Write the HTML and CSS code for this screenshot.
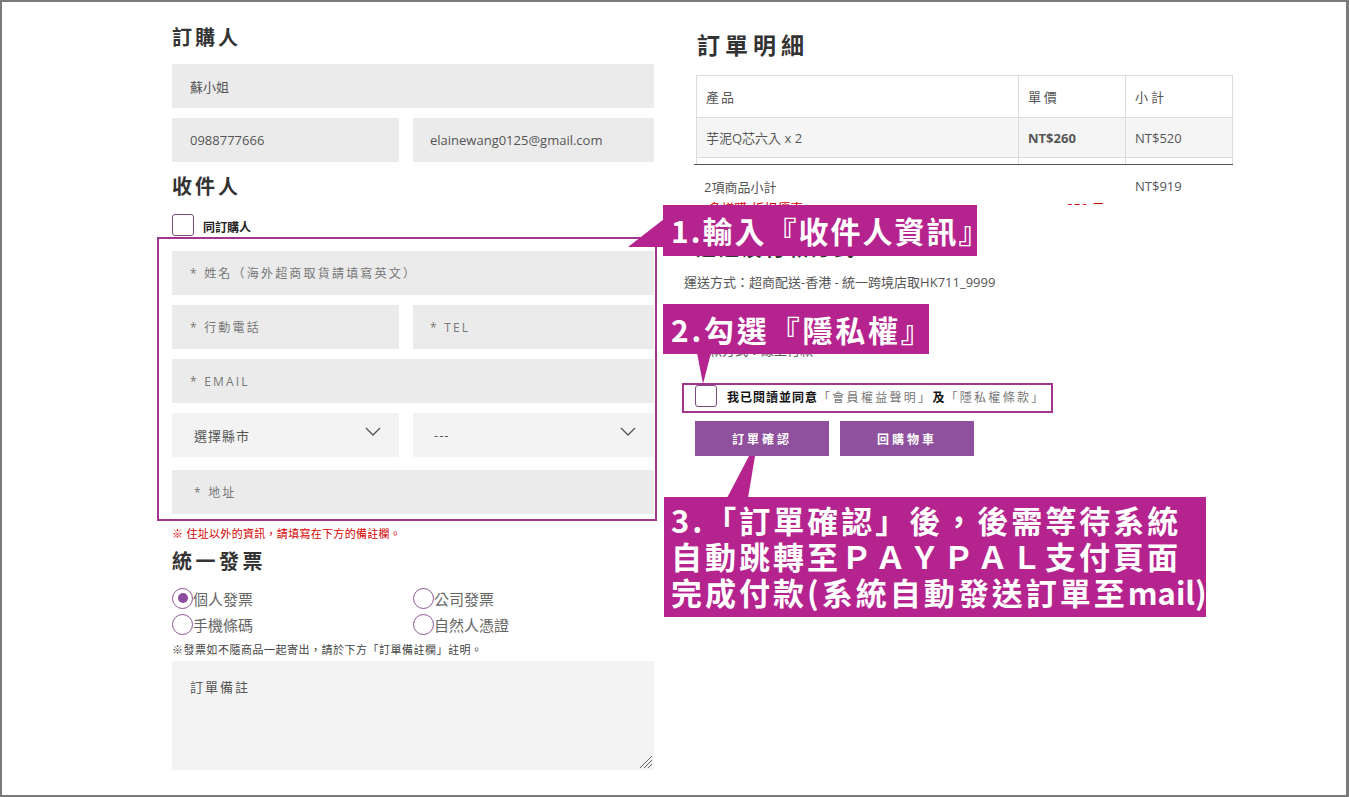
FILE: index.html
```html
<!DOCTYPE html>
<html lang="zh-Hant">
<head>
<meta charset="utf-8">
<title>結帳</title>
<link rel="stylesheet" href="styles.css">
</head>
<body>
<div class="frame">
  <div class="page">
    <section class="col-left">
      <h2 class="sec-title">訂購人</h2>
      <div class="field">蘇小姐</div>
      <div class="row2 mt10">
        <div class="field">0988777666</div>
        <div class="field val-right">elainewang0125@gmail.com</div>
      </div>
      <h2 class="sec-title t-recv">收件人</h2>
      <label class="chk-row"><span class="chk"></span><span class="chk-label">同訂購人</span></label>
      <div class="recv-fields">
        <div class="field ph">* 姓名（海外超商取貨請填寫英文）</div>
        <div class="row2">
          <div class="field ph">* 行動電話</div>
          <div class="field ph val-right">* TEL</div>
        </div>
        <div class="field ph">* EMAIL</div>
        <div class="row2">
          <div class="select"><span>選擇縣市</span><svg width="16" height="9" viewBox="0 0 16 9"><path d="M1 1 L8 8 L15 1" fill="none" stroke="#555" stroke-width="1.3"/></svg></div>
          <div class="select sel-right"><span>---</span><svg width="16" height="9" viewBox="0 0 16 9"><path d="M1 1 L8 8 L15 1" fill="none" stroke="#555" stroke-width="1.3"/></svg></div>
        </div>
        <div class="field ph addr">* 地址</div>
      </div>
      <p class="warn">※ 住址以外的資訊，請填寫在下方的備註欄。</p>
      <h2 class="sec-title t-inv">統一發票</h2>
      <div class="radios">
        <label class="radio"><span class="circle on"></span>個人發票</label>
        <label class="radio"><span class="circle"></span>公司發票</label>
        <label class="radio"><span class="circle"></span>手機條碼</label>
        <label class="radio"><span class="circle"></span>自然人憑證</label>
      </div>
      <p class="note">※發票如不隨商品一起寄出，請於下方「訂單備註欄」註明。</p>
      <div class="textarea">
        <span>訂單備註</span>
        <svg class="grip" width="14" height="14" viewBox="0 0 14 14"><path d="M14 2 L2 14 M14 6 L6 14 M14 10 L10 14" stroke="#666" stroke-width="1"/></svg>
      </div>
    </section>

    <section class="col-right">
      <h2 class="detail-title">訂單明細</h2>
      <div class="tbl-wrap">
        <table class="tbl">
          <thead>
            <tr><th class="c1">產品</th><th class="c2">單價</th><th class="c3">小計</th></tr>
          </thead>
          <tbody>
            <tr class="alt"><td>芋泥Q芯六入 x 2</td><td class="b">NT$260</td><td>NT$520</td></tr>
            <tr><td>芋泥鬆餅禮盒 x 1</td><td class="b">NT$399</td><td>NT$399</td></tr>
          </tbody>
        </table>
      </div>
      <div class="sum">
        <div class="sum-row"><span>2項商品小計</span><span></span><span>NT$919</span></div>
        <div class="sum-row red"><span>-多樣購-折扣優惠</span><span class="disc">-250 元</span><span></span></div>
      </div>
      <h3 class="sub-title">運送及付款方式</h3>
      <p class="ship">運送方式：超商配送-香港 - 統一跨境店取HK711_9999</p>
      <h3 class="sub-title hidden-t">付款方式</h3>
      <p class="pay">付款方式：線上付款</p>
      <label class="agree"><span class="chk"></span><span class="agree-txt"><b>我已閱讀並同意</b>「會員權益聲明」<b>及</b>「隱私權條款」</span></label>
      <div class="btns">
        <button class="btn">訂單確認</button>
        <button class="btn">回購物車</button>
      </div>
    </section>
  </div>
</div>

<div class="hl hl-recv"></div>
<div class="hl hl-agree"></div>
<svg class="ptrs" width="1349" height="797" viewBox="0 0 1349 797">
  <polygon points="628,247 664,219 664,247" fill="#b5248e"/>
  <polygon points="697,353 711,353 703,384" fill="#b5248e"/>
  <polygon points="749,456 755,456 748,498 727,498" fill="#b5248e"/>
</svg>
<div class="callout c1">1.輸入『收件人資訊』</div>
<div class="callout c2">2.勾選『隱私權』</div>
<div class="callout c3">3.「訂單確認」後，後需等待系統<br>自動跳轉至ＰＡＹＰＡＬ支付頁面<br>完成付款(系統自動發送訂單至<span class="latin">mail)</span></div>
</body>
</html>
```

FILE: styles.css
```css
* { box-sizing: border-box; margin: 0; padding: 0; }
html, body { width: 1349px; height: 797px; }
body {
  position: relative;
  overflow: hidden;
  background: #fff;
  font-family: "Open Sans", "Noto Sans CJK TC", sans-serif;
  color: #555;
}
.frame {
  height: 797px;
  border: 2px solid #7a7a7a;
  border-right-width: 3px;
}
.page {
  display: grid;
  grid-template-columns: 482px 537px;
  column-gap: 42px;
  padding: 21px 0 0 170px;
  align-items: start;
}

/* ---------- left column ---------- */
.sec-title {
  font-family: "Noto Sans CJK TC", sans-serif;
  font-size: 20px;
  font-weight: 700;
  line-height: 28px;
  letter-spacing: 3px;
  color: #333;
  margin-bottom: 13px;
}
.field {
  height: 44px;
  background: #ebebeb;
  display: flex;
  align-items: center;
  padding-left: 18px;
  font-size: 13px;
  color: #555;
}
.val-right { padding-left: 17px; }
.mt10 { margin-top: 10px; }
.row2 {
  display: grid;
  grid-template-columns: 227px 241px;
  column-gap: 14px;
}
.t-recv { margin: 10px 0 14px; }
.chk-row { display: flex; align-items: center; height: 22px; }
.chk {
  width: 22px;
  height: 22px;
  border: 1.5px solid #7d4a80;
  border-radius: 3px;
  background: #fff;
  flex: none;
}
.chk-label {
  margin-left: 9px;
  font-size: 12px;
  font-weight: 700;
  color: #222;
  padding-top: 3px;
}
.recv-fields {
  margin-top: 15px;
  display: flex;
  flex-direction: column;
  gap: 10px;
}
.ph {
  color: #777;
  font-size: 12px;
  letter-spacing: 2.2px;
}
.select {
  height: 44px;
  background: #f3f3f3;
  display: flex;
  align-items: center;
  justify-content: space-between;
  padding: 0 18px 0 22px;
  font-size: 13px;
  color: #555;
  letter-spacing: 1px;
}
.select svg { margin-top: -8px; }
.sel-right { padding-left: 21px; }
.addr { margin-top: 3px; padding-left: 22px; }
.warn {
  margin-top: 12px;
  font-size: 11px;
  line-height: 16px;
  letter-spacing: 0.3px;
  color: #d40000;
}
.t-inv { margin: 5px 0 10px; letter-spacing: 3.5px; }
.radios {
  display: grid;
  grid-template-columns: 241px 241px;
  grid-auto-rows: 26px;
}
.radio {
  display: flex;
  align-items: center;
  font-size: 15px;
  color: #666;
}
.circle {
  width: 21px;
  height: 21px;
  border-radius: 50%;
  border: 1.5px solid #8e5596;
  flex: none;
  display: flex;
  align-items: center;
  justify-content: center;
}
.circle.on::after {
  content: "";
  width: 10px;
  height: 10px;
  border-radius: 50%;
  background: #8c4b9c;
}
.note {
  margin-top: 5px;
  font-size: 11px;
  line-height: 16px;
  letter-spacing: 0.5px;
  color: #444;
}
.textarea {
  position: relative;
  margin-top: 3px;
  height: 109px;
  background: #f3f3f3;
  padding: 18px 18px;
  font-size: 13px;
  line-height: 16px;
  letter-spacing: 2px;
  color: #555;
}
.grip { position: absolute; right: 2px; bottom: 2px; }

/* ---------- right column ---------- */
.detail-title {
  font-family: "Noto Sans CJK TC", sans-serif;
  font-size: 23px;
  font-weight: 700;
  line-height: 30px;
  letter-spacing: 5px;
  color: #333;
  margin: 6px 0 16px 1px;
}
.tbl-wrap {
  width: 539px;
  height: 90px;
  overflow: hidden;
  border-bottom: 1px solid #555;
  margin-left: -2px;
  padding-left: 2px;
}
.tbl {
  width: 536px;
  table-layout: fixed;
  border-collapse: collapse;
}
.tbl th, .tbl td {
  border: 1px solid #dcdcdc;
  text-align: left;
  font-family: "Open Sans", "Noto Sans CJK TC", sans-serif;
  font-size: 13px;
  font-weight: 400;
  line-height: 18px;
  color: #555;
  padding: 0 0 0 9px;
}
.tbl th { height: 42px; background: #fff; }
.tbl td { height: 40px; }
.tbl th.c1 { width: 322px; }
.tbl th.c2 { width: 107px; }
.tbl th.c3 { width: 107px; }
.tbl .alt td { background: #f5f5f5; }
.tbl td.b { font-weight: 700; }
.sum {
  margin-top: 10px;
  height: 30px;
  overflow: hidden;
}
.sum-row {
  display: grid;
  grid-template-columns: 322px 107px 1fr;
  height: 22px;
  align-items: center;
  font-size: 13px;
  color: #555;
}
.sum-row span:first-child { padding-left: 8px; }
.sum-row span:last-child { padding-left: 10px; }
.sum-row.red { color: #d40000; height: 20px; }
.disc { padding-left: 44px; }
.sub-title {
  font-family: "Noto Sans CJK TC", sans-serif;
  font-size: 20px;
  font-weight: 700;
  line-height: 28px;
  letter-spacing: 3px;
  color: #333;
  margin-top: 29px;
}
.ship {
  margin: 10px 0 0 -12px;
  font-size: 13px;
  line-height: 20px;
  color: #555;
}
.hidden-t { margin-top: 14px; }
.pay {
  margin-top: 6px;
  font-size: 13px;
  line-height: 20px;
  color: #555;
}
.agree {
  margin: 25px 0 0 -1px;
  display: flex;
  align-items: center;
  height: 22px;
}
.agree-txt {
  margin-left: 10px;
  font-family: "Noto Sans CJK TC", sans-serif;
  font-size: 12px;
  letter-spacing: 2.3px;
  color: #777;
  padding-top: 1px;
}
.agree-txt b { color: #111; letter-spacing: 1px; }
.btns {
  margin: 14px 0 0 -1px;
  display: flex;
  gap: 11px;
}
.btn {
  width: 134px;
  height: 35px;
  border: 0;
  background: #8f519e;
  color: #fff;
  font-family: "Noto Sans CJK TC", sans-serif;
  font-size: 12px;
  font-weight: 700;
  letter-spacing: 3px;
}

/* ---------- annotations ---------- */
.hl {
  position: absolute;
  border: 2px solid #a3358f;
}
.hl-recv { left: 157px; top: 237px; width: 500px; height: 284px; }
.hl-agree { left: 682px; top: 383px; width: 371px; height: 30px; }
.ptrs { position: absolute; left: 0; top: 0; pointer-events: none; }
.callout {
  position: absolute;
  background: #b5248e;
  color: #fff;
  font-family: "Noto Sans CJK TC", sans-serif;
  font-weight: 700;
  white-space: nowrap;
}
.c1 {
  left: 663px; top: 205px; width: 314px; height: 51px;
  font-size: 30px; line-height: 51px; padding-left: 8px;
  letter-spacing: 2px;
}
.c2 {
  left: 663px; top: 304px; width: 266px; height: 50px;
  font-size: 30px; line-height: 50px; padding-left: 8px;
  letter-spacing: 2.8px;
}
.c3 {
  left: 664px; top: 497px; width: 542px; height: 120px;
  font-size: 31px; line-height: 36px; padding: 5px 0 0 7px;
  letter-spacing: 3px;
}
.c3 .latin { letter-spacing: 0; }
```
